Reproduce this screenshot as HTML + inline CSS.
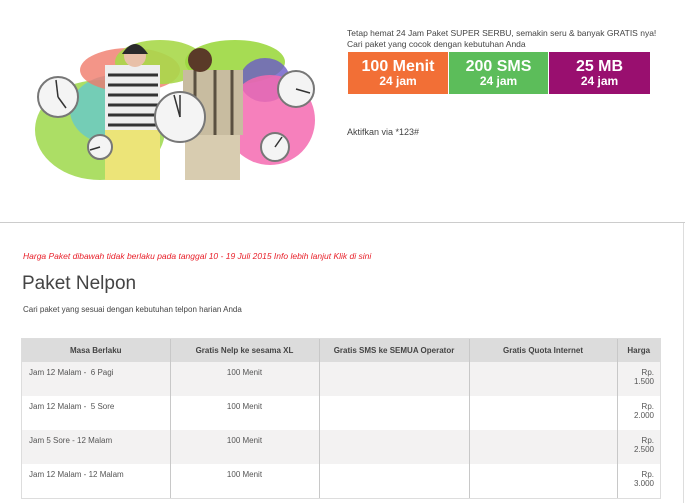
<!DOCTYPE html>
<html><head><meta charset="utf-8"><style>
body{margin:0;width:685px;height:503px;background:#fff;font-family:"Liberation Sans",sans-serif;color:#444;overflow:hidden;position:relative}
.abs{position:absolute}
.box{position:absolute;top:52px;height:42px;color:#fff;text-align:center;font-weight:bold}
.box .a{font-size:16px;line-height:17px;margin-top:6px}
.box .b{font-size:12px;line-height:12px}
table{position:absolute;left:22px;top:339px;width:638px;border-collapse:collapse;font-size:8.5px;color:#555;table-layout:fixed;outline:1px solid #ddd}
th{background:#dcdcdc;height:23px;font-weight:bold;border-left:1px solid #c8c8c8;font-size:8px;color:#444;padding:0}
td{height:34px;vertical-align:top;padding:6px 7px 0;border-left:1px solid #c8c8c8;box-sizing:border-box;font-size:8px}
tr.g td{background:#f3f2f2}
th:first-child,td:first-child{border-left:none}
</style></head><body>
<svg class="abs" style="left:20px;top:20px" width="320" height="200">
<ellipse cx="80" cy="110" rx="65" ry="50" fill="#9ed84a" opacity=".85"/>
<ellipse cx="95" cy="90" rx="45" ry="35" fill="#5cc6d8" opacity=".7"/>
<ellipse cx="110" cy="50" rx="50" ry="22" fill="#f07a6a" opacity=".8"/>
<ellipse cx="140" cy="42" rx="45" ry="22" fill="#a8d84a" opacity=".9"/>
<ellipse cx="215" cy="42" rx="50" ry="22" fill="#9cd840" opacity=".9"/>
<ellipse cx="245" cy="60" rx="25" ry="22" fill="#6a5ac8" opacity=".8"/>
<ellipse cx="250" cy="100" rx="45" ry="45" fill="#f46ab0" opacity=".85"/>
<rect x="85" y="45" width="55" height="70" fill="#eee"/>
<g stroke="#333" stroke-width="3"><line x1="88" y1="55" x2="138" y2="55"/><line x1="88" y1="65" x2="138" y2="65"/><line x1="88" y1="75" x2="138" y2="75"/><line x1="88" y1="85" x2="138" y2="85"/><line x1="88" y1="95" x2="138" y2="95"/><line x1="88" y1="105" x2="138" y2="105"/></g>
<rect x="85" y="110" width="55" height="50" fill="#ece478"/>
<circle cx="115" cy="36" r="11" fill="#e8c0a8"/><path d="M102 34q13-20 26 0" fill="#2a2a2a"/>
<rect x="163" y="50" width="60" height="65" fill="#c8bca0"/>
<g stroke="#5a5040" stroke-width="3"><line x1="175" y1="50" x2="175" y2="115"/><line x1="195" y1="50" x2="195" y2="115"/><line x1="212" y1="50" x2="212" y2="115"/></g>
<rect x="165" y="115" width="55" height="45" fill="#d8ccb0"/>
<circle cx="180" cy="40" r="12" fill="#5a3a28"/>
<g fill="#f4f4f4" stroke="#777" stroke-width="2">
<circle cx="38" cy="77" r="20"/><circle cx="160" cy="97" r="25"/><circle cx="276" cy="69" r="18"/><circle cx="80" cy="127" r="12"/><circle cx="255" cy="127" r="14"/></g>
<g stroke="#333" stroke-width="1.5"><line x1="38" y1="77" x2="36" y2="60"/><line x1="38" y1="77" x2="46" y2="88"/><line x1="160" y1="97" x2="154" y2="75"/><line x1="160" y1="97" x2="160" y2="75"/><line x1="276" y1="69" x2="290" y2="73"/><line x1="255" y1="127" x2="262" y2="117"/><line x1="80" y1="127" x2="70" y2="130"/></g>
</svg>
<div class="abs" style="left:347px;top:28px;width:310px;font-size:8.5px;line-height:11px;color:#444">Tetap hemat 24 Jam Paket SUPER SERBU, semakin seru &amp; banyak GRATIS nya! Cari paket yang cocok dengan kebutuhan Anda</div>
<div class="box" style="left:348px;width:100px;background:#f26f36"><div class="a">100 Menit</div><div class="b">24 jam</div></div>
<div class="box" style="left:449px;width:99px;background:#5cbd5a"><div class="a">200 SMS</div><div class="b">24 jam</div></div>
<div class="box" style="left:549px;width:101px;background:#990f6f"><div class="a">25 MB</div><div class="b">24 jam</div></div>
<div class="abs" style="left:347px;top:127px;font-size:9px;color:#444">Aktifkan via *123#</div>
<div class="abs" style="left:0;top:222px;width:685px;height:1px;background:#ccc"></div>
<div class="abs" style="left:683px;top:223px;width:1px;height:280px;background:#ddd"></div>
<div class="abs" style="left:23px;top:251px;font-size:8.5px;font-style:italic;color:#e8202a">Harga Paket dibawah tidak berlaku pada tanggal 10 - 19 Juli 2015 Info lebih lanjut Klik di sini</div>
<div class="abs" style="left:22px;top:273px;font-size:19px;color:#444">Paket Nelpon</div>
<div class="abs" style="left:23px;top:305px;font-size:8px;color:#444">Cari paket yang sesuai dengan kebutuhan telpon harian Anda</div>
<table>
<colgroup><col style="width:148px"><col style="width:149px"><col style="width:150px"><col style="width:148px"><col style="width:43px"></colgroup>
<tr><th>Masa Berlaku</th><th>Gratis Nelp ke sesama XL</th><th>Gratis SMS ke SEMUA Operator</th><th>Gratis Quota Internet</th><th>Harga</th></tr>
<tr class="g"><td>Jam 12 Malam -&nbsp; 6 Pagi</td><td style="text-align:center">100 Menit</td><td></td><td></td><td style="text-align:right;padding-right:6px">Rp.<br>1.500</td></tr>
<tr><td>Jam 12 Malam -&nbsp; 5 Sore</td><td style="text-align:center">100 Menit</td><td></td><td></td><td style="text-align:right;padding-right:6px">Rp.<br>2.000</td></tr>
<tr class="g"><td>Jam 5 Sore - 12 Malam</td><td style="text-align:center">100 Menit</td><td></td><td></td><td style="text-align:right;padding-right:6px">Rp.<br>2.500</td></tr>
<tr><td>Jam 12 Malam - 12 Malam</td><td style="text-align:center">100 Menit</td><td></td><td></td><td style="text-align:right;padding-right:6px">Rp.<br>3.000</td></tr>
</table>
</body></html>
